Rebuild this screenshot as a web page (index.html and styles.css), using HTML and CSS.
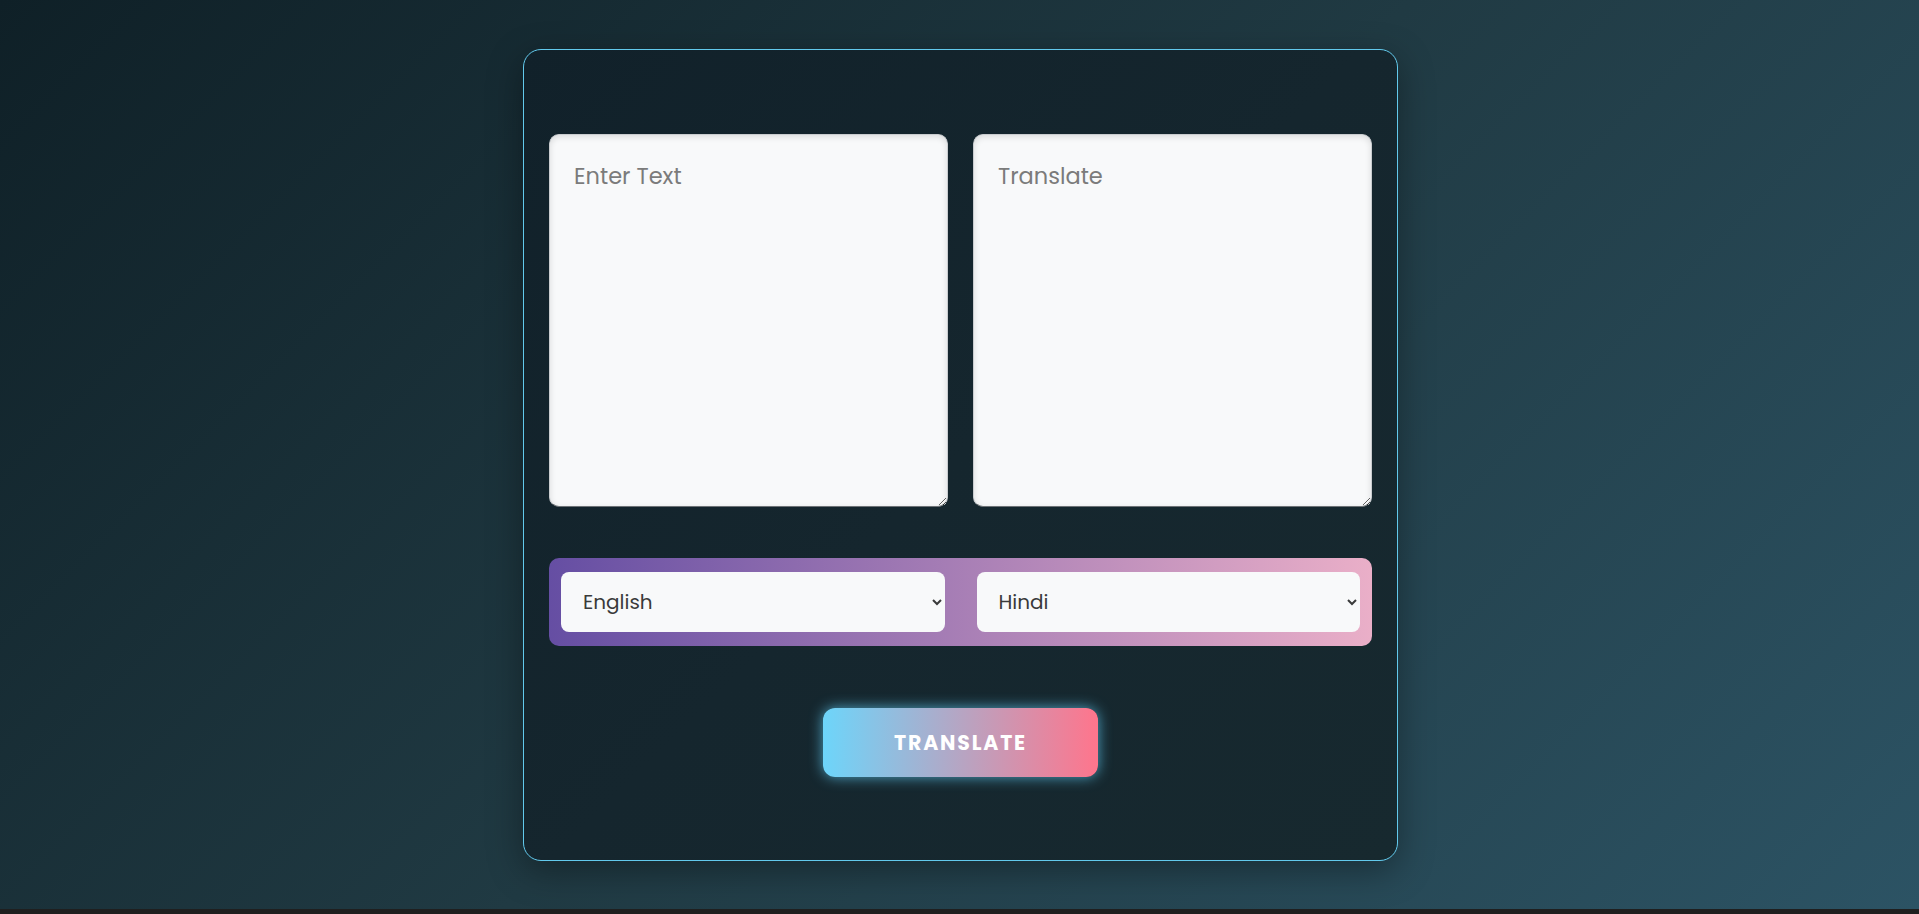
FILE: index.html
```html
<!DOCTYPE html>
<html lang="en">
<head>
<meta charset="utf-8">
<title>Translator</title>
<link rel="stylesheet" href="styles.css">
</head>
<body>
  <main class="card">
    <div class="text-row">
      <textarea class="text-box" placeholder="Enter Text"></textarea>
      <textarea class="text-box" placeholder="Translate"></textarea>
    </div>
    <div class="lang-bar">
      <select class="lang-select">
        <option>English</option>
        <option>Hindi</option>
      </select>
      <select class="lang-select">
        <option>Hindi</option>
        <option>English</option>
      </select>
    </div>
    <div class="action">
      <button class="translate-btn" type="button">TRANSLATE</button>
    </div>
  </main>
</body>
</html>
```

FILE: styles.css
```css
html {
  margin: 0;
  background: #1f1f1f;
}

body {
  margin: 0;
  height: 909px;
  padding-left: 2px;
  background: linear-gradient(135deg, #0f2027 0%, #203a43 50%, #2c5364 100%);
  display: flex;
  align-items: center;
  justify-content: center;
  font-family: "Poppins", "Inter", "Noto Sans", sans-serif;
}

.card {
  box-sizing: border-box;
  width: 875px;
  height: 812px;
  border: 1px solid #62c9ec;
  border-radius: 18px;
  background: linear-gradient(135deg, #11212a 0%, #15262e 50%, #17292f 100%);
  box-shadow: 0 10px 35px rgba(0, 0, 0, 0.35);
  padding: 84px 25px 0 25px;
  display: flex;
  flex-direction: column;
}

.text-row {
  display: grid;
  grid-template-columns: 1fr 1fr;
  gap: 25px;
}

.text-box {
  box-sizing: border-box;
  height: 373px;
  width: 100%;
  margin: 0;
  padding: 25px 24px;
  border: 1px solid #c9cccf;
  border-bottom-color: #6d7276;
  border-radius: 10px;
  background: #f8f9fa;
  box-shadow: inset 0 2px 6px rgba(0, 0, 0, 0.12);
  font-family: "Poppins", "Inter", "Noto Sans", sans-serif;
  font-size: 22.5px;
  line-height: 1.45;
  color: #333;
  outline: none;
}

.text-box::placeholder {
  color: #7b7b7b;
}

.lang-bar {
  margin-top: 51px;
  height: 88px;
  box-sizing: border-box;
  padding: 14px 12px;
  border-radius: 10px;
  background: linear-gradient(to right, #654ea3, #eaafc8);
  display: grid;
  grid-template-columns: 1fr 1fr;
  gap: 32px;
}

.lang-select {
  height: 60px;
  width: 100%;
  border: none;
  border-radius: 8px;
  background-color: #f8f9fa;
  color: #3a3a3a;
  padding: 0 8px 0 18px;
  font-family: "Poppins", "Inter", "Noto Sans", sans-serif;
  font-size: 20px;
  outline: none;
}

.action {
  margin-top: 62px;
  display: flex;
  justify-content: center;
}

.translate-btn {
  width: 275px;
  height: 69px;
  border: none;
  border-radius: 12px;
  background: linear-gradient(to right, #6dd5fa, #ff758c);
  box-shadow: 0 0 14px rgba(98, 205, 245, 0.75);
  color: #ffffff;
  font-family: "Poppins", "Inter", "Noto Sans", sans-serif;
  font-weight: 700;
  font-size: 20.5px;
  letter-spacing: 1.8px;
  cursor: pointer;
}
```
